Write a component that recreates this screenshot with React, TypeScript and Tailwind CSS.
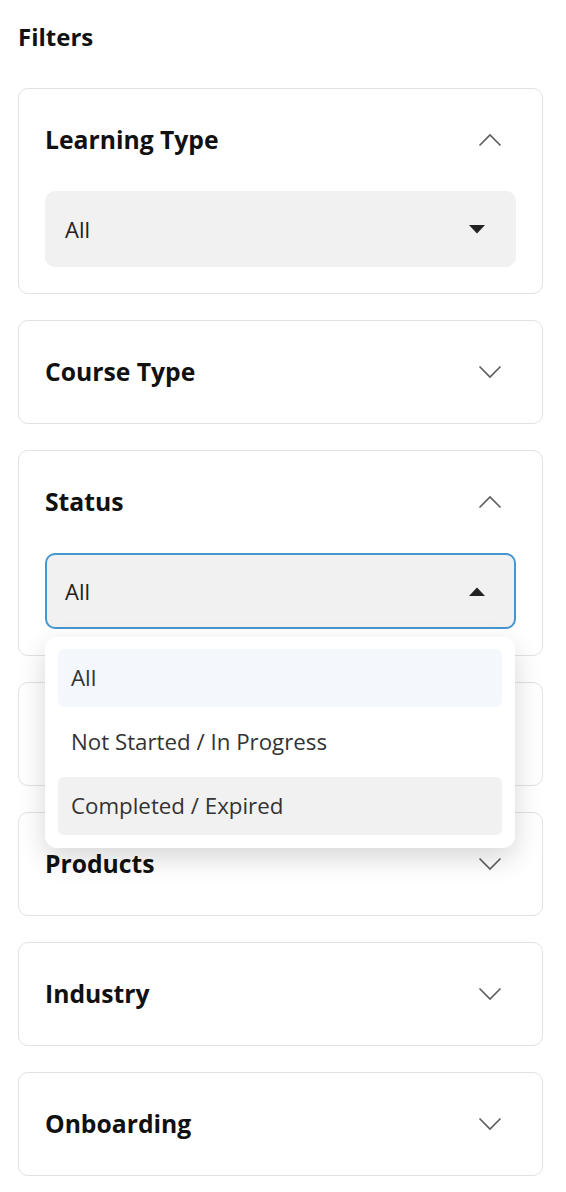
import React from "react";

function Chevron({ up }: { up?: boolean }) {
  return (
    <svg width="24" height="14" viewBox="0 0 24 14" className="shrink-0">
      <polyline
        points={up ? "1.5,12.5 12,2 22.5,12.5" : "1.5,1.5 12,12 22.5,1.5"}
        fill="none"
        stroke="#5f5f5f"
        strokeWidth="1.7"
      />
    </svg>
  );
}

function Caret({ up }: { up?: boolean }) {
  return (
    <svg width="16" height="9" viewBox="0 0 16 9" className="shrink-0">
      <polygon points={up ? "0,9 8,0.5 16,9" : "0,0 16,0 8,8.5"} fill="#222222" />
    </svg>
  );
}

function Card({
  title,
  open,
  children,
}: {
  title: string;
  open?: boolean;
  children?: React.ReactNode;
}) {
  return (
    <div className="rounded-[10px] border border-[#e2e2e2] bg-white px-[26px] pt-[36px] pb-[26px]">
      <div className="flex h-[30px] items-center justify-between pr-[14px]">
        <span className="text-[24.7px] font-bold leading-[30px] text-[#111]">{title}</span>
        <Chevron up={open} />
      </div>
      {open ? <div className="mt-[36px]">{children}</div> : <div className="h-[10px]" />}
    </div>
  );
}

function Select({ focused }: { focused?: boolean }) {
  return (
    <div
      className={
        focused
          ? "flex h-[76px] items-center justify-between rounded-[10px] border-2 border-[#4796d0] bg-[#f1f1f1] pl-[18px] pr-[29px]"
          : "flex h-[76px] items-center justify-between rounded-[10px] border-2 border-transparent bg-[#f1f1f1] pl-[18px] pr-[29px]"
      }
    >
      <span className="text-[22px] leading-[28px] text-[#222]">All</span>
      <Caret up={focused} />
    </div>
  );
}

export default function App() {
  return (
    <div
      className="min-h-[1192px] w-[566px] bg-white pl-[18px] pr-[23px] pt-[22px] pb-[16px]"
      style={{ fontFamily: '"Open Sans", "Noto Sans", sans-serif' }}
    >
      <h2 className="text-[24px] font-bold leading-[30px] text-[#111]">Filters</h2>
      <div className="mt-[36px] flex flex-col gap-[26px]">
        <Card title="Learning Type" open>
          <Select />
        </Card>
        <Card title="Course Type" />
        <Card title="Status" open>
          <div className="relative">
            <Select focused />
            <div className="absolute left-0 right-[1px] top-[84px] z-20 flex flex-col gap-[6px] rounded-[12px] bg-white px-[13px] pt-[12px] pb-[13px] shadow-[0_10px_28px_rgba(0,0,0,0.16)]">
              <div className="flex h-[58px] items-center rounded-[6px] bg-[#f4f7fb] px-[13px] text-[22.3px] text-[#333]">
                All
              </div>
              <div className="flex h-[58px] items-center rounded-[6px] px-[13px] text-[22.3px] text-[#333]">
                Not Started / In Progress
              </div>
              <div className="flex h-[58px] items-center rounded-[6px] bg-[#f1f1f1] px-[13px] text-[22.3px] text-[#333]">
                Completed / Expired
              </div>
            </div>
          </div>
        </Card>
        <Card title="" />
        <Card title="Products" />
        <Card title="Industry" />
        <Card title="Onboarding" />
      </div>
    </div>
  );
}
